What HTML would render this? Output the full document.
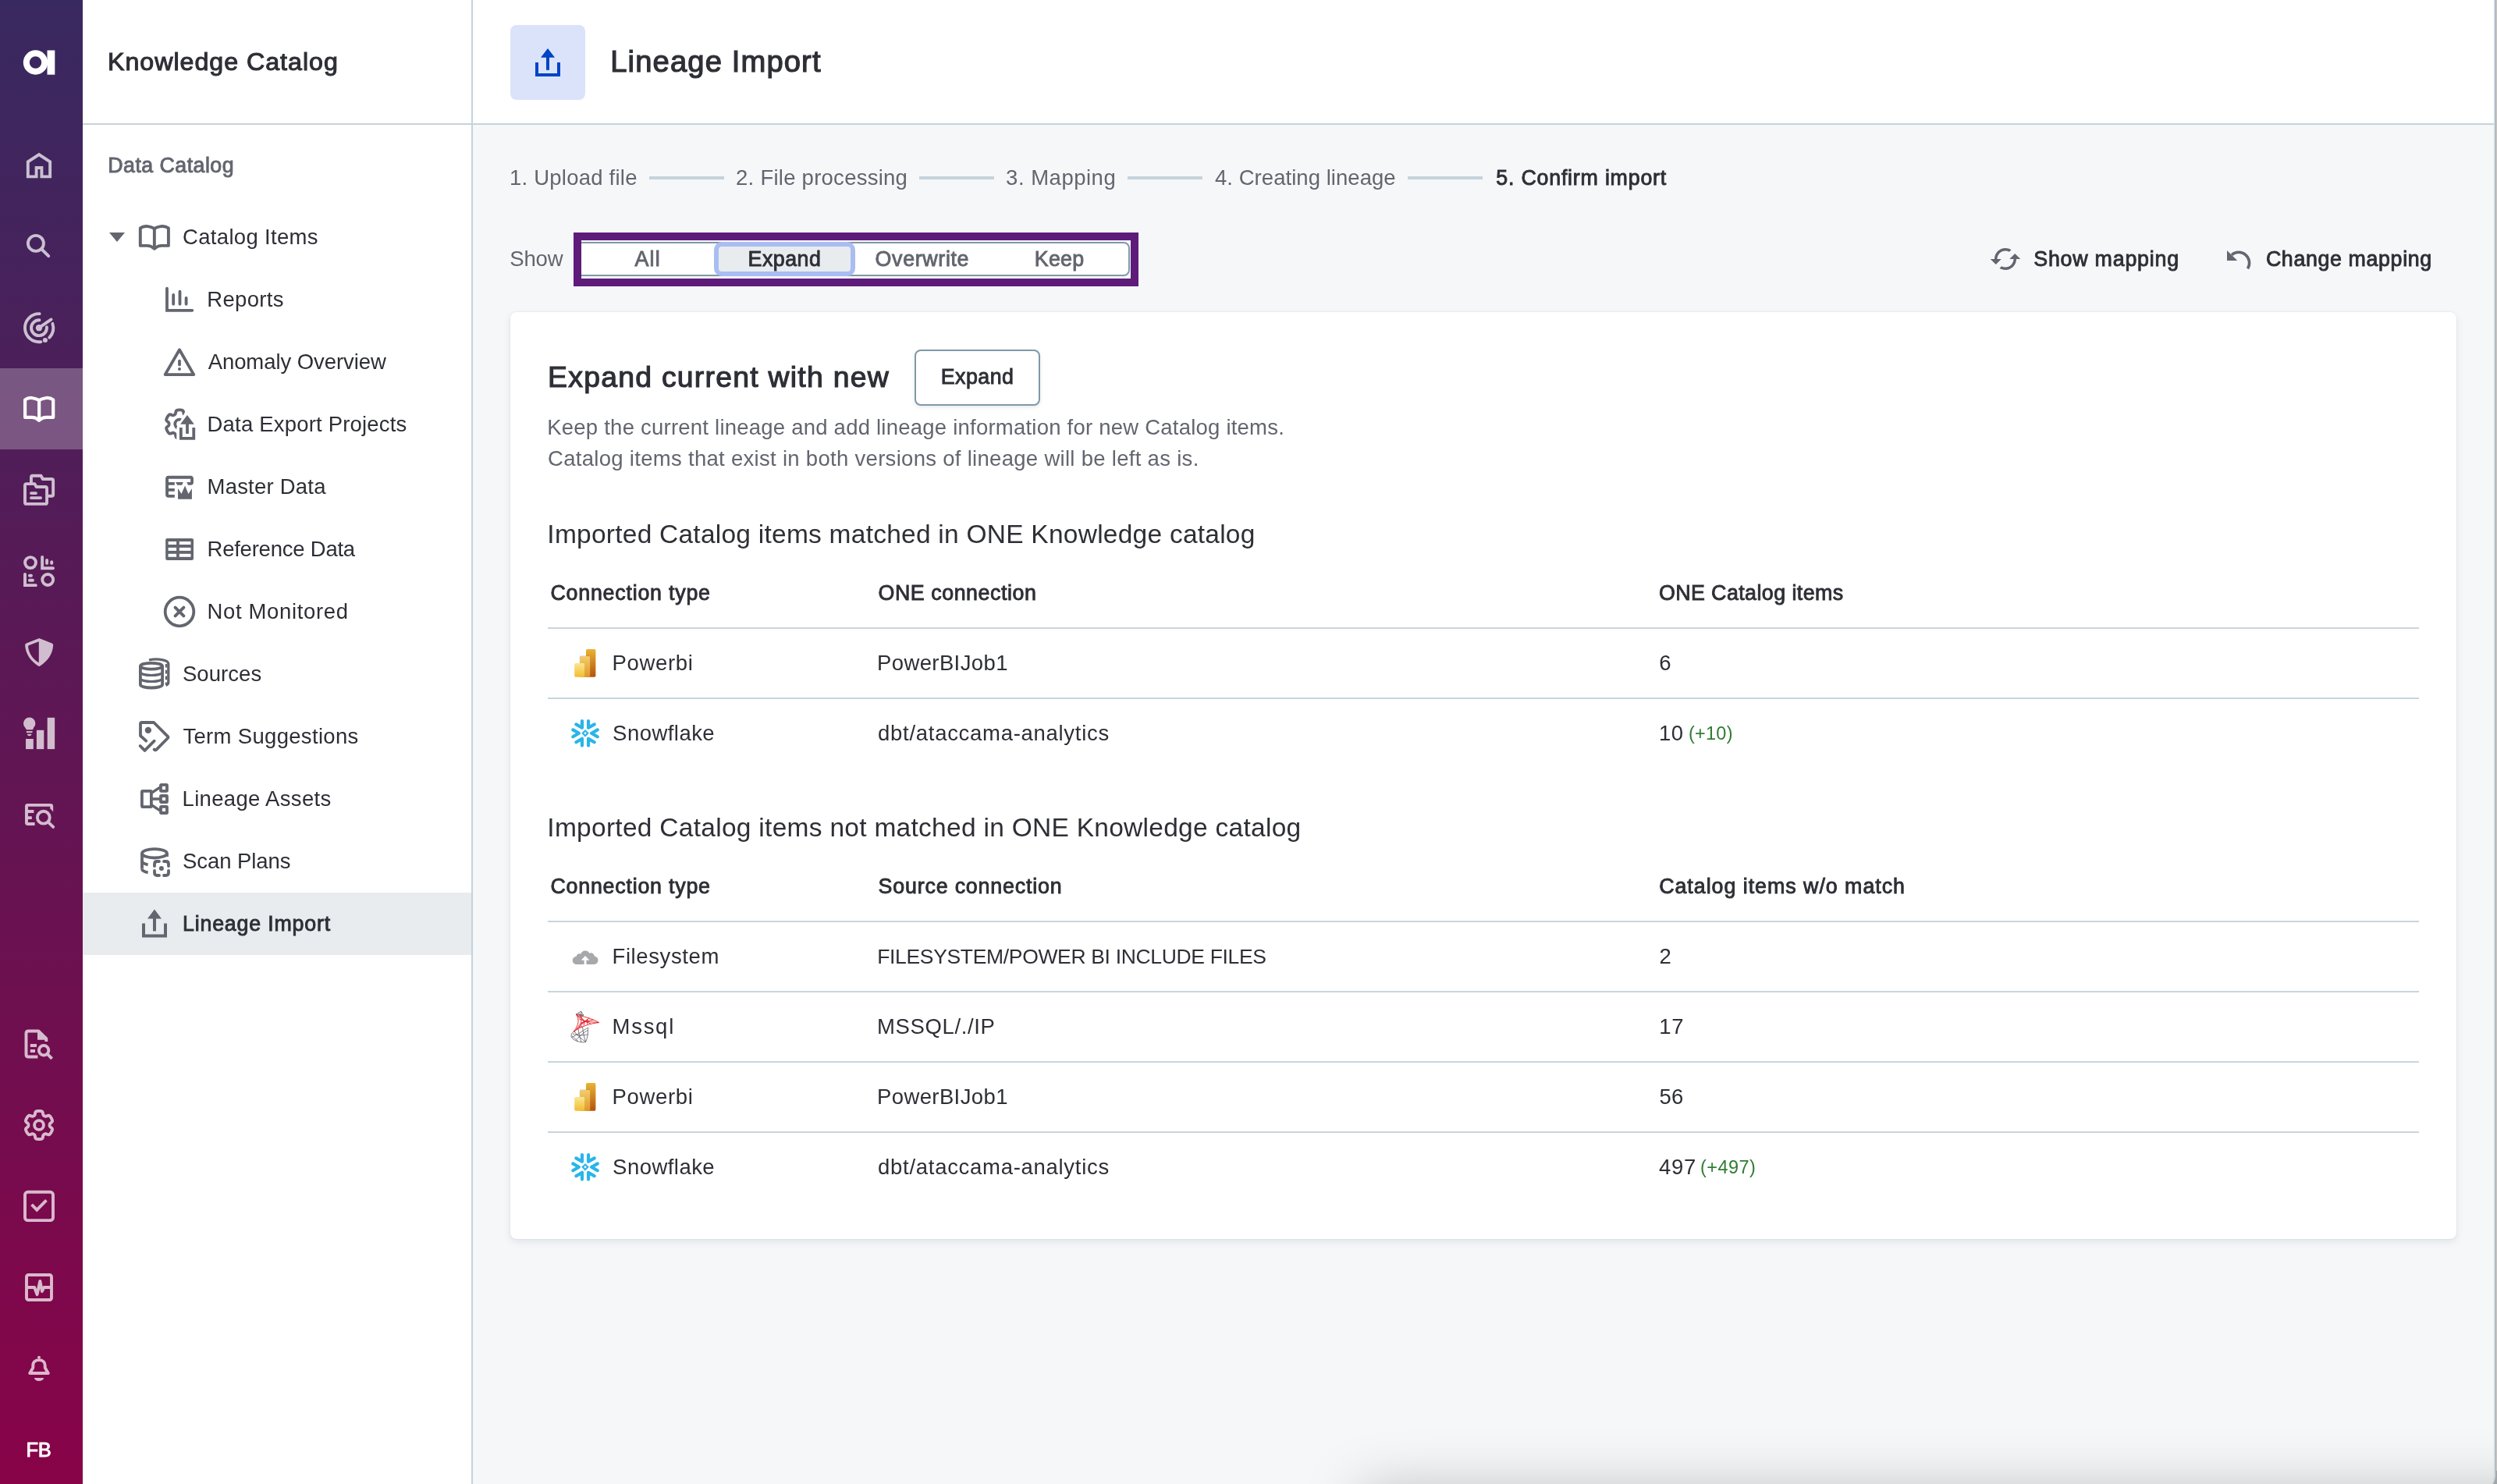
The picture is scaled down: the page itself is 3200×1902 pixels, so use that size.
<!DOCTYPE html>
<html lang="en">
<head>
<meta charset="utf-8">
<title>Lineage Import</title>
<style>
*{box-sizing:border-box;margin:0;padding:0}
html,body{width:3200px;height:1902px;overflow:hidden;background:#f6f7f9}
body{font-family:"Liberation Sans",sans-serif;font-size:28px;color:#2e2f36;position:relative}
#app{position:absolute;left:0;top:0;width:3200px;height:1902px;overflow:hidden;will-change:transform}
.abs{position:absolute}
.t{position:absolute;white-space:nowrap;line-height:40px;height:40px}
.m{-webkit-text-stroke:0.9px currentColor}
.g{color:#63656f}
.grn{color:#2e7d32}
#rail{left:0;top:0;width:106px;height:1902px;background:linear-gradient(180deg,#382960 0%,#880348 100%)}
#ract{left:0;top:472px;width:106px;height:104px;background:rgba(255,255,255,.25)}
#side{left:106px;top:0;width:498px;height:1902px;background:#fff}
#sact{left:106px;top:1144px;width:498px;height:80px;background:#e8ecef}
#sideb{left:604px;top:0;width:2px;height:1902px;background:#c5d3dc}
#head{left:606px;top:0;width:2590px;height:158px;background:#fff}
#headb{left:106px;top:158px;width:3090px;height:2px;background:#c5d3dc}
#hicon{left:654px;top:32px;width:96px;height:96px;border-radius:8px;background:#dbe3fb}
#card{left:654px;top:400px;width:2494px;height:1188px;background:#fff;border-radius:8px;box-shadow:0 4px 10px rgba(50,80,100,.11),0 0 2px rgba(50,80,100,.14)}
.hl{position:absolute;left:702px;width:2398px;height:2px;background:#c8d6dc}
.sl{position:absolute;top:226px;width:96px;height:4px;background:#c5d3dc}
#caret{left:140px;top:298px;width:0;height:0;border-left:10px solid transparent;border-right:10px solid transparent;border-top:12px solid #63656f}
#seg{left:737px;top:310px;width:711px;height:44px;background:#fff;border:2px solid #7f99a8;border-radius:8px}
#segsel{left:915px;top:310px;width:181px;height:44px;background:#e8ecef;border:6px solid #a9bdf2;border-radius:10px}
#purple{left:735px;top:298px;width:724px;height:69px;border:10px solid #5e1b7a}
#cbtn{left:1172px;top:448px;width:161px;height:72px;border:2px solid #7f99a8;border-radius:8px;background:#fff;box-shadow:0 2px 5px rgba(30,50,70,.10)}
#redge0{left:3190px;top:1880px;width:10px;height:22px;background:#b4b6b9}
#redge{left:3100px;top:-30px;width:98px;height:1943px;border-right:2px solid #c9d8e1;border-bottom-right-radius:22px;background:transparent}
#redgebg{left:3150px;top:1860px;width:46px;height:53px;border-bottom-right-radius:20px;background:#f6f7f9}
#redge2{left:3100px;top:-30px;width:99.4px;height:1944px;border-right:1.4px solid #a3a3a3;border-bottom-right-radius:23px}
#redge3{left:3199.4px;top:0;width:1px;height:1885px;background:#cfcfcf}
#bshadow{left:1745px;top:1912px;width:1700px;height:120px;box-shadow:0 0 76px rgba(0,0,0,.25)}
</style>
</head>
<body>
<div id="app">
<div class="abs" id="side"></div>
<div class="abs" id="sact"></div>
<div class="abs" id="head"></div>
<div class="abs" id="sideb"></div>
<div class="abs" id="headb"></div>
<div class="abs" id="rail"></div>
<div class="abs" id="ract"></div>
<div class="abs" id="redge0"></div>
<div class="abs" id="redgebg"></div>
<div class="abs" id="bshadow"></div>
<div class="abs" id="redge3"></div>
<div class="abs" id="redge2"></div>
<div class="abs" id="redge"></div>
<div class="abs" id="hicon"></div>
<div class="abs" id="caret"></div>
<div class="abs" id="card"></div>
<div class="hl" style="top:804px"></div><div class="hl" style="top:894px"></div><div class="hl" style="top:1180px"></div><div class="hl" style="top:1270px"></div><div class="hl" style="top:1360px"></div><div class="hl" style="top:1450px"></div>
<div class="sl" style="left:832px"></div><div class="sl" style="left:1178px"></div><div class="sl" style="left:1445px"></div><div class="sl" style="left:1804px"></div>
<div class="abs" id="seg"></div>
<div class="abs" id="segsel"></div>
<div class="abs" id="purple"></div>
<div class="abs" id="cbtn"></div>
<svg class="abs" id="icons" style="left:0;top:0" width="3200" height="1902" viewBox="0 0 3200 1902">
<g opacity="0.72"><path d="M35.8,226.35 V207.3 L50,198 L64.15,207.3 V226.35 H53.4 V214.95 H46.6 V226.35 Z" fill="none" stroke="#fff" stroke-width="3.9" stroke-width="3.7" stroke-linejoin="miter"/><circle cx="45.9" cy="311.9" r="10" fill="none" stroke="#fff" stroke-width="3.9" stroke-width="4"/><path d="M53,319 L62.2,328.2" fill="none" stroke="#fff" stroke-width="3.9" stroke-width="3.8" stroke-linecap="round"/><g fill="none" stroke="#fff" stroke-width="3.9" stroke-width="4.2" stroke-linecap="round"><path d="M50.63,402.16 A18.05,18.05 0 1 0 52.39,438.09"/><path d="M67.38,414.79 A18.2,18.2 0 0 1 63.27,432.66"/><path d="M50.43,410.26 A9.95,9.95 0 1 0 59.89,419.13"/><path d="M50,420.2 L65.55,409.46"/></g><circle cx="50" cy="420.2" r="4.15" fill="#fff"/><circle cx="57.9" cy="435.96" r="3.05" fill="#fff"/><g transform="translate(30,608)" fill="none" stroke="#fff" stroke-width="3.9" stroke-width="4" stroke-linejoin="round"><path d="M9.96,12.1 V3.8 Q9.96,1.8 11.96,1.8 H22.6 L24.8,6 H36.15 Q38.15,6 38.15,8 V25.8 Q38.15,27.8 36.15,27.8 H30.05"/><path d="M4,12.1 H14.4 L16.6,16.06 H28.05 Q30.05,16.06 30.05,18.06 V35.9 Q30.05,37.9 28.05,37.9 H4 Q2,37.9 2,35.9 V14.1 Q2,12.1 4,12.1 Z"/><path d="M10,24.05 H16 M10,30.05 H22.1" stroke-linecap="round" stroke-width="3.8"/></g><g fill="none" stroke="#fff" stroke-width="3.9" stroke-width="4.05"><circle cx="39" cy="721.1" r="6.95"/><circle cx="61.2" cy="743" r="6.95"/><g stroke-linecap="round" stroke-linejoin="miter" stroke-width="3.9"><path d="M54.15,714 V728.25 H68"/><path d="M60.1,718 V721.9 M66.2,720.1 V721.9"/><path d="M32,735.9 V750.15 H45.85"/><path d="M37.9,737.8 H40 M37.9,743.8 H42"/></g></g><path fill-rule="evenodd" fill="#fff" d="M50.2,817.9 L66.6,824.4 Q68.3,825.1 68.2,827 C67.6,838 61,848 50.2,854.15 C39.4,848 32.7,838 32.1,827 Q32,825.1 33.7,824.4 Z M49.8,822.2 L37.3,827.1 Q36,827.6 36.1,829 C37,837 41.5,844.5 49.8,849.3 Z"/><g transform="translate(30,920)" fill="#fff"><path d="M4,15.2 L2.2,12.6 A7.7,7.7 0 1 1 13.2,12.6 L11.9,15.2 Z"/><rect x="3.8" y="17.1" width="7.7" height="2"/><path d="M4.9,20.85 H10.4 Q10.4,23.3 7.65,23.3 Q4.9,23.3 4.9,20.85 Z"/><rect x="3.05" y="27" width="9.75" height="13.1"/><rect x="16.9" y="15.8" width="9.4" height="24.3"/><rect x="30.7" y="-0.2" width="9.45" height="40.3"/></g><g transform="translate(30,1028)"><g fill="none" stroke="#fff" stroke-width="3.9" stroke-width="3.9" stroke-linejoin="round"><path d="M14.6,28 H5.5 Q4,28 4,26.5 V5.4 Q4,3.9 5.5,3.9 H34.7 Q36.2,3.9 36.2,5.4 V8.6"/><path d="M4,11.95 H13.4 M4,20.15 H10.8"/></g><path d="M34.25,8 H38.15 V12.6 Z" fill="#fff"/><circle cx="25.8" cy="19.7" r="7.9" fill="none" stroke="#fff" stroke-width="3.9" stroke-width="4.2"/><path d="M31.4,25.3 L38.2,31.96" fill="none" stroke="#fff" stroke-width="3.9" stroke-linecap="round"/></g><g transform="translate(30,1318)"><path d="M18.4,36.5 H6.5 Q3.5,36.5 3.5,33.5 V6.55 Q3.5,3.55 6.5,3.55 H19.5 L29.3,13.2 V16.9" fill="none" stroke="#fff" stroke-width="3.9" stroke-width="3.3" stroke-linejoin="round"/><path d="M18,2 L20.2,1.9 L30.95,12.5 V16.9 L27.2,14.7 H18 Z" fill="#fff"/><path d="M8.8,21.95 H17 M8.8,28.95 H15" fill="none" stroke="#fff" stroke-width="3.9" stroke-width="3.5"/><circle cx="26.1" cy="28.3" r="6.24" fill="none" stroke="#fff" stroke-width="3.9" stroke-width="3.7"/><path d="M30.5,32.7 L36.6,38.8" fill="none" stroke="#fff" stroke-width="3.9" stroke-width="3.6"/></g><path d="M63.60,1442.00 L63.61,1441.64 L63.63,1441.29 L63.69,1440.92 L63.79,1440.55 L64.00,1440.16 L64.36,1439.73 L64.92,1439.23 L65.64,1438.68 L66.31,1438.08 L66.78,1437.50 L67.00,1436.97 L67.04,1436.46 L66.98,1435.99 L66.86,1435.53 L66.70,1435.08 L66.53,1434.64 L66.33,1434.21 L66.13,1433.78 L65.91,1433.36 L65.68,1432.95 L65.43,1432.54 L65.18,1432.14 L64.91,1431.75 L64.63,1431.37 L64.34,1430.99 L64.03,1430.64 L63.69,1430.30 L63.31,1430.01 L62.86,1429.80 L62.28,1429.72 L61.55,1429.83 L60.70,1430.12 L59.86,1430.46 L59.15,1430.70 L58.60,1430.80 L58.15,1430.78 L57.78,1430.69 L57.43,1430.55 L57.11,1430.39 L56.80,1430.22 L56.49,1430.04 L56.20,1429.84 L55.91,1429.61 L55.64,1429.33 L55.40,1428.96 L55.21,1428.43 L55.07,1427.69 L54.94,1426.80 L54.76,1425.92 L54.50,1425.22 L54.14,1424.76 L53.73,1424.48 L53.28,1424.29 L52.82,1424.17 L52.36,1424.08 L51.89,1424.01 L51.42,1423.96 L50.95,1423.93 L50.47,1423.91 L50.00,1423.90 L49.53,1423.91 L49.05,1423.93 L48.58,1423.96 L48.11,1424.01 L47.64,1424.08 L47.18,1424.17 L46.72,1424.29 L46.27,1424.48 L45.86,1424.76 L45.50,1425.22 L45.24,1425.92 L45.06,1426.80 L44.93,1427.69 L44.79,1428.43 L44.60,1428.96 L44.36,1429.33 L44.09,1429.61 L43.80,1429.84 L43.51,1430.04 L43.20,1430.22 L42.89,1430.39 L42.57,1430.55 L42.22,1430.69 L41.85,1430.78 L41.40,1430.80 L40.85,1430.70 L40.14,1430.46 L39.30,1430.12 L38.45,1429.83 L37.72,1429.72 L37.14,1429.80 L36.69,1430.01 L36.31,1430.30 L35.97,1430.64 L35.66,1430.99 L35.37,1431.37 L35.09,1431.75 L34.82,1432.14 L34.57,1432.54 L34.32,1432.95 L34.09,1433.36 L33.87,1433.78 L33.67,1434.21 L33.47,1434.64 L33.30,1435.08 L33.14,1435.53 L33.02,1435.99 L32.96,1436.46 L33.00,1436.97 L33.22,1437.50 L33.69,1438.08 L34.36,1438.68 L35.08,1439.23 L35.64,1439.73 L36.00,1440.16 L36.21,1440.55 L36.31,1440.92 L36.37,1441.29 L36.39,1441.64 L36.40,1442.00 L36.39,1442.36 L36.37,1442.71 L36.31,1443.08 L36.21,1443.45 L36.00,1443.84 L35.64,1444.27 L35.08,1444.77 L34.36,1445.32 L33.69,1445.92 L33.22,1446.50 L33.00,1447.03 L32.96,1447.54 L33.02,1448.01 L33.14,1448.47 L33.30,1448.92 L33.47,1449.36 L33.67,1449.79 L33.87,1450.22 L34.09,1450.64 L34.32,1451.05 L34.57,1451.46 L34.82,1451.86 L35.09,1452.25 L35.37,1452.63 L35.66,1453.01 L35.97,1453.36 L36.31,1453.70 L36.69,1453.99 L37.14,1454.20 L37.72,1454.28 L38.45,1454.17 L39.30,1453.88 L40.14,1453.54 L40.85,1453.30 L41.40,1453.20 L41.85,1453.22 L42.22,1453.31 L42.57,1453.45 L42.89,1453.61 L43.20,1453.78 L43.51,1453.96 L43.80,1454.16 L44.09,1454.39 L44.36,1454.67 L44.60,1455.04 L44.79,1455.57 L44.93,1456.31 L45.06,1457.20 L45.24,1458.08 L45.50,1458.78 L45.86,1459.24 L46.27,1459.52 L46.72,1459.71 L47.18,1459.83 L47.64,1459.92 L48.11,1459.99 L48.58,1460.04 L49.05,1460.07 L49.53,1460.09 L50.00,1460.10 L50.47,1460.09 L50.95,1460.07 L51.42,1460.04 L51.89,1459.99 L52.36,1459.92 L52.82,1459.83 L53.28,1459.71 L53.73,1459.52 L54.14,1459.24 L54.50,1458.78 L54.76,1458.08 L54.94,1457.20 L55.07,1456.31 L55.21,1455.57 L55.40,1455.04 L55.64,1454.67 L55.91,1454.39 L56.20,1454.16 L56.49,1453.96 L56.80,1453.78 L57.11,1453.61 L57.43,1453.45 L57.78,1453.31 L58.15,1453.22 L58.60,1453.20 L59.15,1453.30 L59.86,1453.54 L60.70,1453.88 L61.55,1454.17 L62.28,1454.28 L62.86,1454.20 L63.31,1453.99 L63.69,1453.70 L64.03,1453.36 L64.34,1453.01 L64.63,1452.63 L64.91,1452.25 L65.18,1451.86 L65.43,1451.46 L65.68,1451.05 L65.91,1450.64 L66.13,1450.22 L66.33,1449.79 L66.53,1449.36 L66.70,1448.92 L66.86,1448.47 L66.98,1448.01 L67.04,1447.54 L67.00,1447.03 L66.78,1446.50 L66.31,1445.92 L65.64,1445.32 L64.92,1444.77 L64.36,1444.27 L64.00,1443.84 L63.79,1443.45 L63.69,1443.08 L63.63,1442.71 L63.61,1442.36Z" fill="none" stroke="#fff" stroke-width="3.9" stroke-width="4.2" stroke-linejoin="round"/><circle cx="50" cy="1442" r="5.9" fill="none" stroke="#fff" stroke-width="3.9" stroke-width="4"/><g transform="translate(30,1526)"><rect x="2" y="1.8" width="36" height="36.3" rx="3.7" fill="none" stroke="#fff" stroke-width="3.9" stroke-width="4"/><path d="M10.6,17.8 L17.25,24.6 L29.4,12.3" fill="none" stroke="#fff" stroke-width="3.9" stroke-width="3.6"/></g><g transform="translate(30,1630)"><rect x="4" y="4" width="32" height="32" rx="2.5" fill="none" stroke="#fff" stroke-width="3.9" stroke-width="4"/><path d="M4,20 H14.1 L17.6,29.2 L21.3,11.9 L23.95,25 L26.4,20 H36" fill="none" stroke="#fff" stroke-width="3.9" stroke-width="3.3" stroke-linejoin="round"/></g><g transform="translate(30,1736)"><path d="M8.2,24 L12.3,17 V14 C12.3,9.5 15.5,7.15 20,7.15 C24.5,7.15 27.7,9.5 27.7,14 V17 L31.8,24 Z" fill="none" stroke="#fff" stroke-width="3.9" stroke-width="3.9" stroke-linejoin="round"/><circle cx="20" cy="3.7" r="2" fill="#fff"/><path d="M13.9,30 H26.1 A6.1,4 0 0 1 13.9,30 Z" fill="#fff"/></g></g>
<circle cx="45.5" cy="80" r="11.7" fill="none" stroke="#fff" stroke-width="8"/><rect x="60.5" y="64.5" width="9.8" height="31.2" fill="#fff"/>
<g transform="translate(30.1,503)" fill="none" stroke="#fff" stroke-width="4.2" stroke-linejoin="round"><path d="M2,9.4 C5,7.2 9,6.6 12,7.2 C15.5,7.8 18,8.8 20.05,10 C22,8.8 24.5,7.8 28,7.2 C31,6.6 35,7.2 38.1,9.4 V31.9 H29 C25.5,31.9 22.5,33.6 20.05,35.8 C17.5,33.6 14.5,31.9 11,31.9 H2 Z"/><path d="M20.05,10 V35"/></g>
<g transform="translate(177.8,283)" fill="none" stroke="#63656f" stroke-width="3.9" stroke-linejoin="round"><path d="M2,9.4 C5,7.2 9,6.6 12,7.2 C15.5,7.8 18,8.8 20.05,10 C22,8.8 24.5,7.8 28,7.2 C31,6.6 35,7.2 38.1,9.4 V31.9 H29 C25.5,31.9 22.5,33.6 20.05,35.8 C17.5,33.6 14.5,31.9 11,31.9 H2 Z"/><path d="M20.05,10 V35"/></g>
<g transform="translate(210,363)" fill="none" stroke="#63656f" stroke-width="3.8" stroke-linecap="round"><path d="M4,6.7 V34.8 H36.3"/><path d="M12.2,14.9 V26.7 M20.5,10.7 V26.7 M28.6,18.9 V26.7"/></g>
<g transform="translate(210,443)" fill="none" stroke="#63656f" stroke-width="3.8" stroke-linejoin="round" stroke-linecap="round"><path d="M20,5.3 L38.3,37.1 H1.6 Z"/><path d="M20,19.6 V24.4"/><circle cx="20" cy="29.9" r="1.2" fill="#63656f" stroke-width="1.6"/></g>
<g transform="translate(210,523)"><clipPath id="cpx"><path d="M-3,-3 H30 L27.2,5.1 L16.3,25.3 V44 H-3 Z"/></clipPath><g clip-path="url(#cpx)"><path d="M33.80,20.50 L33.81,20.14 L33.83,19.79 L33.89,19.42 L33.99,19.05 L34.20,18.66 L34.56,18.23 L35.12,17.73 L35.84,17.18 L36.51,16.58 L36.98,16.00 L37.20,15.47 L37.24,14.96 L37.18,14.49 L37.06,14.03 L36.90,13.58 L36.73,13.14 L36.53,12.71 L36.33,12.28 L36.11,11.86 L35.88,11.45 L35.63,11.04 L35.38,10.64 L35.11,10.25 L34.83,9.87 L34.54,9.49 L34.23,9.14 L33.89,8.80 L33.51,8.51 L33.06,8.30 L32.48,8.22 L31.75,8.33 L30.90,8.62 L30.06,8.96 L29.35,9.20 L28.80,9.30 L28.35,9.28 L27.98,9.19 L27.63,9.05 L27.31,8.89 L27.00,8.72 L26.69,8.54 L26.40,8.34 L26.11,8.11 L25.84,7.83 L25.60,7.46 L25.41,6.93 L25.27,6.19 L25.14,5.30 L24.96,4.42 L24.70,3.72 L24.34,3.26 L23.93,2.98 L23.48,2.79 L23.02,2.67 L22.56,2.58 L22.09,2.51 L21.62,2.46 L21.15,2.43 L20.67,2.41 L20.20,2.40 L19.73,2.41 L19.25,2.43 L18.78,2.46 L18.31,2.51 L17.84,2.58 L17.38,2.67 L16.92,2.79 L16.47,2.98 L16.06,3.26 L15.70,3.72 L15.44,4.42 L15.26,5.30 L15.13,6.19 L14.99,6.93 L14.80,7.46 L14.56,7.83 L14.29,8.11 L14.00,8.34 L13.71,8.54 L13.40,8.72 L13.09,8.89 L12.77,9.05 L12.42,9.19 L12.05,9.28 L11.60,9.30 L11.05,9.20 L10.34,8.96 L9.50,8.62 L8.65,8.33 L7.92,8.22 L7.34,8.30 L6.89,8.51 L6.51,8.80 L6.17,9.14 L5.86,9.49 L5.57,9.87 L5.29,10.25 L5.02,10.64 L4.77,11.04 L4.52,11.45 L4.29,11.86 L4.07,12.28 L3.87,12.71 L3.67,13.14 L3.50,13.58 L3.34,14.03 L3.22,14.49 L3.16,14.96 L3.20,15.47 L3.42,16.00 L3.89,16.58 L4.56,17.18 L5.28,17.73 L5.84,18.23 L6.20,18.66 L6.41,19.05 L6.51,19.42 L6.57,19.79 L6.59,20.14 L6.60,20.50 L6.59,20.86 L6.57,21.21 L6.51,21.58 L6.41,21.95 L6.20,22.34 L5.84,22.77 L5.28,23.27 L4.56,23.82 L3.89,24.42 L3.42,25.00 L3.20,25.53 L3.16,26.04 L3.22,26.51 L3.34,26.97 L3.50,27.42 L3.67,27.86 L3.87,28.29 L4.07,28.72 L4.29,29.14 L4.52,29.55 L4.77,29.96 L5.02,30.36 L5.29,30.75 L5.57,31.13 L5.86,31.51 L6.17,31.86 L6.51,32.20 L6.89,32.49 L7.34,32.70 L7.92,32.78 L8.65,32.67 L9.50,32.38 L10.34,32.04 L11.05,31.80 L11.60,31.70 L12.05,31.72 L12.42,31.81 L12.77,31.95 L13.09,32.11 L13.40,32.28 L13.71,32.46 L14.00,32.66 L14.29,32.89 L14.56,33.17 L14.80,33.54 L14.99,34.07 L15.13,34.81 L15.26,35.70 L15.44,36.58 L15.70,37.28 L16.06,37.74 L16.47,38.02 L16.92,38.21 L17.38,38.33 L17.84,38.42 L18.31,38.49 L18.78,38.54 L19.25,38.57 L19.73,38.59 L20.20,38.60 L20.67,38.59 L21.15,38.57 L21.62,38.54 L22.09,38.49 L22.56,38.42 L23.02,38.33 L23.48,38.21 L23.93,38.02 L24.34,37.74 L24.70,37.28 L24.96,36.58 L25.14,35.70 L25.27,34.81 L25.41,34.07 L25.60,33.54 L25.84,33.17 L26.11,32.89 L26.40,32.66 L26.69,32.46 L27.00,32.28 L27.31,32.11 L27.63,31.95 L27.98,31.81 L28.35,31.72 L28.80,31.70 L29.35,31.80 L30.06,32.04 L30.90,32.38 L31.75,32.67 L32.48,32.78 L33.06,32.70 L33.51,32.49 L33.89,32.20 L34.23,31.86 L34.54,31.51 L34.83,31.13 L35.11,30.75 L35.38,30.36 L35.63,29.96 L35.88,29.55 L36.11,29.14 L36.33,28.72 L36.53,28.29 L36.73,27.86 L36.90,27.42 L37.06,26.97 L37.18,26.51 L37.24,26.04 L37.20,25.53 L36.98,25.00 L36.51,24.42 L35.84,23.82 L35.12,23.27 L34.56,22.77 L34.20,22.34 L33.99,21.95 L33.89,21.58 L33.83,21.21 L33.81,20.86Z" fill="none" stroke="#63656f" stroke-width="3.8" stroke-width="4" stroke-linejoin="round"/><circle cx="20.2" cy="20.5" r="5.9" fill="none" stroke="#63656f" stroke-width="3.8" stroke-width="4"/></g><path d="M21.1,20.7 L29.9,9.1 L38.9,20.7 Z" fill="#63656f"/><rect x="28.1" y="20" width="3.8" height="12.9" fill="#63656f"/><path d="M21.85,25.1 V38.95 H38.25 V25.1" fill="none" stroke="#63656f" stroke-width="3.8" stroke-width="3.7"/></g>
<g transform="translate(210,603)"><path d="M13.8,32.9 H6 Q4.05,32.9 4.05,31 V10.7 Q4.05,8.75 6,8.75 H34.1 Q36.05,8.75 36.05,10.7 V15 Q36.05,16.95 34.1,16.95 H31.1 M4.05,16.95 H13.8 M4.05,24.95 H13.8" fill="none" stroke="#63656f" stroke-width="3.8" stroke-width="3.7"/><path d="M14.95,15.1 H24.85 L23.15,18.8 H17.35 Z M29.1,15.1 H31.4 V18.8 H31.1 Z" fill="#63656f"/><path d="M18.06,36.8 V23.6 L18.3,23.2 L22.45,30.1 L27.1,19.5 L31.5,30 L35.75,23.2 L35.9,23.6 V36.8 Z" fill="#63656f"/></g>
<g transform="translate(210,683)"><rect x="2.2" y="7" width="35.8" height="28" rx="2.2" fill="#63656f"/><rect x="5.6" y="11" width="10.5" height="4" fill="#fff"/><rect x="19.8" y="11" width="14.7" height="4" fill="#fff"/><rect x="5.6" y="18.9" width="10.5" height="4" fill="#fff"/><rect x="19.8" y="18.9" width="14.7" height="4" fill="#fff"/><rect x="5.6" y="26.8" width="10.5" height="4" fill="#fff"/><rect x="19.8" y="26.8" width="14.7" height="4" fill="#fff"/></g>
<g transform="translate(210,763)" fill="none" stroke="#63656f" stroke-width="3.8"><circle cx="20" cy="21" r="18.3"/><path d="M14.6,15.6 L25.4,26.4 M25.4,15.6 L14.6,26.4" stroke-width="4" stroke-linecap="round"/></g>
<g transform="translate(178,843)" fill="none" stroke="#63656f" stroke-width="3.8"><ellipse cx="16" cy="10.7" rx="14.1" ry="3.9"/><path d="M1.9,10.7 V34.6 A14.1,3.9 0 0 0 30.1,34.6 V10.7"/><path d="M1.9,18.6 A14.1,3.9 0 0 0 30.1,18.6 M1.9,26.6 A14.1,3.9 0 0 0 30.1,26.6" stroke-width="3.2"/><path d="M13,2.9 C24,0.6 37.8,2.6 37.8,7.6 V31.5 C37.8,33.4 36.4,34.6 34.6,35.4" stroke-width="3.3"/><path d="M35,8 V35" stroke-width="2.4" stroke-dasharray="4.6 3.2"/></g>
<g transform="translate(178,923)" fill="none" stroke="#63656f" stroke-width="3.8" stroke-linecap="round" stroke-linejoin="round"><path d="M9.3,26.6 L2,20 V4.6 Q2,3 3.6,3 H19.2 L37,20.8 Q38,21.9 37,23 L22.6,37.6 Q21,39 19.6,37.6"/><path d="M1.6,33 L7.5,38.9 L19.7,26.7"/><circle cx="11.9" cy="12.9" r="2.3" fill="#63656f"/></g>
<g transform="translate(178,1003)" fill="none" stroke="#63656f" stroke-width="3.8" stroke-width="3.7" stroke-linejoin="round"><rect x="3.9" y="10.9" width="12" height="20.2" rx="1"/><rect x="28" y="2.9" width="8" height="8" rx="0.8"/><rect x="28" y="17" width="8" height="8" rx="0.8"/><rect x="28" y="30.9" width="8" height="8.1" rx="0.8"/><path d="M16,21 H28 M16.6,13 L27,6.2 M16.6,29 L27,35.8" stroke-width="3.4"/></g>
<g transform="translate(178,1083)" fill="none" stroke="#63656f" stroke-width="3.8" stroke-width="3.8"><ellipse cx="20" cy="10.8" rx="16" ry="5.7"/><path d="M4,10.8 V30.5 M36,10.8 V15"/><path d="M4,20.5 A16,5.7 0 0 0 11.6,25.3 M4,30.5 A16,5.7 0 0 0 11.6,35.4"/><rect x="13" y="14" width="30" height="30" fill="#fff" stroke="none" opacity="0"/><g stroke-linecap="round"><path d="M20,27 V24.4 Q20,21 23.4,21 H26 M32,21 H34.6 Q38,21 38,24.4 V27 M38,33 V35.6 Q38,39 34.6,39 H32 M26,39 H23.4 Q20,39 20,35.6 V33"/></g><circle cx="28.9" cy="29.9" r="3" fill="#63656f" stroke="none"/></g>
<g transform="translate(178,1163.6)" fill="#63656f"><path d="M11,13.8 L20,2 L29,13.8 Z"/><rect x="18" y="13" width="4" height="16.8"/><path d="M4,20 H8 V34 H32 V20 H36 V38 H4 Z"/></g>
<g transform="translate(682,60)" fill="#0043c4"><path d="M11,13.8 L20,2 L29,13.8 Z"/><rect x="18" y="13" width="4" height="16.8"/><path d="M4,20 H8 V34 H32 V20 H36 V38 H4 Z"/></g>
<g transform="translate(2549,311) scale(1.75)" fill="#63656f"><path d="M19 8l-4 4h3c0 3.31-2.69 6-6 6-1.01 0-1.97-.25-2.8-.7l-1.46 1.46C8.97 19.54 10.43 20 12 20c4.42 0 8-3.58 8-8h3l-4-4zM6 12c0-3.31 2.69-6 6-6 1.01 0 1.97.25 2.8.7l1.46-1.46C15.03 4.46 13.57 4 12 4c-4.42 0-8 3.58-8 8H1l4 4 4-4H6z"/></g>
<path d="M2854,320.9 V333.9 H2867.2 Z" fill="#63656f"/><path d="M2860.02,326.62 A13.7,13.7 0 0 1 2880.52,344.31" fill="none" stroke="#63656f" stroke-width="3.5"/>
<defs><linearGradient id="pb1" x1="0" y1="0" x2="0" y2="1"><stop offset="0" stop-color="#e9b434"/><stop offset="1" stop-color="#b5520f"/></linearGradient><linearGradient id="pb2" x1="0" y1="0" x2="0" y2="1"><stop offset="0" stop-color="#f2cd6e"/><stop offset="1" stop-color="#df9727"/></linearGradient><linearGradient id="pb3" x1="0" y1="0" x2="0" y2="1"><stop offset="0" stop-color="#fbe690"/><stop offset="1" stop-color="#f1bd30"/></linearGradient></defs>
<g transform="translate(0,0)"><rect x="751" y="831.9" width="12.4" height="35.8" rx="1.6" fill="url(#pb1)"/><rect x="742.8" y="840.5" width="13.6" height="27.2" rx="1.6" fill="#b9781f" opacity=".45"/><rect x="743.4" y="840.9" width="12.8" height="26.8" rx="1.6" fill="url(#pb2)"/><rect x="736.2" y="850" width="12.9" height="17.7" rx="1.6" fill="url(#pb3)"/></g>
<g fill="none" stroke="#29b5e8" stroke-width="4.2" stroke-linecap="round" stroke-linejoin="round"><path d="M765.72,944.20 L758.10,939.80 L765.72,935.40"/><path d="M761.67,928.39 L754.05,932.79 L754.05,923.99"/><path d="M745.95,923.99 L745.95,932.79 L738.33,928.39"/><path d="M734.28,935.40 L741.90,939.80 L734.28,944.20"/><path d="M738.33,951.21 L745.95,946.81 L745.95,955.61"/><path d="M754.05,955.61 L754.05,946.81 L761.67,951.21"/></g><path d="M750,935.4 L754.4,939.8 L750,944.1999999999999 L745.6,939.8 Z" fill="#29b5e8" stroke="#29b5e8" stroke-width="0.8" stroke-linejoin="round"/><path d="M750,938.0999999999999 L751.7,939.8 L750,941.5 L748.3,939.8 Z" fill="#fff"/>
<g transform="translate(0,0)"><path d="M739,1236 A5.1,5.1 0 0 1 738.6,1225.8 A4.2,4.2 0 0 1 744.4,1222.6 A5.9,5.9 0 0 1 755.4,1221.8 A4.2,4.2 0 0 1 761.6,1225.6 A5.2,5.2 0 0 1 761,1236 Z" fill="#a6a8ac"/><path d="M744.7,1230.8 L750,1225 L755.4,1230.8 H751.5 V1236.2 H748.6 V1230.8 Z" fill="#fff"/></g>
<g transform="translate(0,0)" fill="none" stroke-linejoin="round"><g stroke="#5a5c63" stroke-width="0.8"><path d="M744.7,1296.2 L738.4,1300 L742,1304 L747.8,1301.2 Z M744.7,1296.2 L745,1302.6 M741,1298.4 L746.5,1301.8 M738.4,1300 L747.8,1301.2"/><path d="M736,1321.6 C731.6,1324.6 730.8,1328 733.6,1331 C737,1334.4 745,1336.8 750.6,1335.4 C752.6,1331 754.2,1324 753.4,1316.6 M736,1321.6 C739,1327 745,1331 750.6,1335.4 M733,1329.4 C738,1327 746,1322 752.6,1317.6 M741,1318.6 C741.6,1324 743,1330 745,1335.8 M746.6,1316 C747,1322 748.6,1330 750.6,1335.4 M734,1325 C740,1327 748,1327.6 753.6,1325.6 M738,1333 C742,1329 748,1323 753,1320.6 M732.6,1327.4 L741,1334.8"/></g><g stroke="#e3242b" stroke-width="0.95"><path d="M738.2,1300 C746,1302.6 758,1305 767.6,1310.6 C758,1311.4 744,1315.4 735.2,1322.4 C741,1314.6 743.4,1307 738.2,1300 Z"/><path d="M738.2,1300 L749.6,1309.2 L767.6,1310.6 M749.6,1309.2 L735.2,1322.4 M742.6,1301.6 L749.6,1309.2 L755.4,1304.6 M749.6,1309.2 L760.6,1307 M749.6,1309.2 L757,1312 M749.6,1309.2 L748,1314.4 M741.6,1305.6 L749.6,1309.2 L742.6,1312.6 M745,1303 L744.6,1311.6 L753,1306.6 L752.6,1312.8 M740.6,1315.6 L753,1306.6 M739,1318 L746,1315"/></g></g>
<g transform="translate(0,556)"><rect x="751" y="831.9" width="12.4" height="35.8" rx="1.6" fill="url(#pb1)"/><rect x="742.8" y="840.5" width="13.6" height="27.2" rx="1.6" fill="#b9781f" opacity=".45"/><rect x="743.4" y="840.9" width="12.8" height="26.8" rx="1.6" fill="url(#pb2)"/><rect x="736.2" y="850" width="12.9" height="17.7" rx="1.6" fill="url(#pb3)"/></g>
<g fill="none" stroke="#29b5e8" stroke-width="4.2" stroke-linecap="round" stroke-linejoin="round"><path d="M765.72,1500.20 L758.10,1495.80 L765.72,1491.40"/><path d="M761.67,1484.39 L754.05,1488.79 L754.05,1479.99"/><path d="M745.95,1479.99 L745.95,1488.79 L738.33,1484.39"/><path d="M734.28,1491.40 L741.90,1495.80 L734.28,1500.20"/><path d="M738.33,1507.21 L745.95,1502.81 L745.95,1511.61"/><path d="M754.05,1511.61 L754.05,1502.81 L761.67,1507.21"/></g><path d="M750,1491.3999999999999 L754.4,1495.8 L750,1500.2 L745.6,1495.8 Z" fill="#29b5e8" stroke="#29b5e8" stroke-width="0.8" stroke-linejoin="round"/><path d="M750,1494.1 L751.7,1495.8 L750,1497.5 L748.3,1495.8 Z" fill="#fff"/>
</svg>
<div class="t m" id="s_title" style="left:138.04px;top:59.00px;font-size:32.2px;letter-spacing:0.976px;-webkit-text-stroke-width:1.1px">Knowledge Catalog</div>
<div class="t m g" id="s_dc" style="left:138.31px;top:192.00px;font-size:26.8px;letter-spacing:0.446px">Data Catalog</div>
<div class="t " id="s_0" style="left:234.01px;top:284.00px;font-size:27.5px;letter-spacing:0.328px">Catalog Items</div>
<div class="t " id="s_1" style="left:265.26px;top:364.00px;font-size:27.5px;letter-spacing:0.337px">Reports</div>
<div class="t " id="s_2" style="left:266.67px;top:444.00px;font-size:27.5px;letter-spacing:-0.074px">Anomaly Overview</div>
<div class="t " id="s_3" style="left:265.53px;top:524.00px;font-size:27.5px;letter-spacing:0.191px">Data Export Projects</div>
<div class="t " id="s_4" style="left:265.53px;top:604.00px;font-size:27.5px;letter-spacing:0.215px">Master Data</div>
<div class="t " id="s_5" style="left:265.53px;top:684.00px;font-size:27.5px;letter-spacing:-0.229px">Reference Data</div>
<div class="t " id="s_6" style="left:265.53px;top:764.00px;font-size:27.5px;letter-spacing:0.646px">Not Monitored</div>
<div class="t " id="s_7" style="left:233.93px;top:844.00px;font-size:27.5px;letter-spacing:0.063px">Sources</div>
<div class="t " id="s_8" style="left:234.41px;top:924.00px;font-size:27.5px;letter-spacing:0.319px">Term Suggestions</div>
<div class="t " id="s_9" style="left:233.53px;top:1004.00px;font-size:27.5px;letter-spacing:0.320px">Lineage Assets</div>
<div class="t " id="s_10" style="left:233.93px;top:1084.00px;font-size:27.5px;letter-spacing:-0.051px">Scan Plans</div>
<div class="t m" id="s_11" style="left:234.04px;top:1164.00px;font-size:26.8px;letter-spacing:0.794px">Lineage Import</div>
<div class="t m" id="h_title" style="left:782.24px;top:59.00px;font-size:38.2px;letter-spacing:1.122px;-webkit-text-stroke-width:1.2px">Lineage Import</div>
<div class="t g" id="st_0" style="left:652.94px;top:208.00px;font-size:27.5px;letter-spacing:0.231px">1. Upload file</div>
<div class="t g" id="st_1" style="left:943.05px;top:208.00px;font-size:27.5px;letter-spacing:0.255px">2. File processing</div>
<div class="t g" id="st_2" style="left:1289.10px;top:208.00px;font-size:27.5px;letter-spacing:0.503px">3. Mapping</div>
<div class="t g" id="st_3" style="left:1557.00px;top:208.00px;font-size:27.5px;letter-spacing:0.045px">4. Creating lineage</div>
<div class="t m" id="st_4" style="left:1917.27px;top:208.00px;font-size:26.8px;letter-spacing:0.780px">5. Confirm import</div>
<div class="t g" id="tb_show" style="left:653.26px;top:312.00px;font-size:27.5px;letter-spacing:-0.145px">Show</div>
<div class="t m g" id="seg_0" style="left:813.59px;top:312.00px;font-size:26.8px;letter-spacing:1.131px">All</div>
<div class="t m" id="seg_1" style="left:958.58px;top:312.00px;font-size:26.8px;letter-spacing:0.473px">Expand</div>
<div class="t m g" id="seg_2" style="left:1121.59px;top:312.00px;font-size:26.8px;letter-spacing:0.662px">Overwrite</div>
<div class="t m g" id="seg_3" style="left:1325.87px;top:312.00px;font-size:26.8px;letter-spacing:0.199px">Keep</div>
<div class="t m" id="tb_sm" style="left:2606.28px;top:312.00px;font-size:26.8px;letter-spacing:0.776px">Show mapping</div>
<div class="t m" id="tb_cm" style="left:2903.88px;top:312.00px;font-size:26.8px;letter-spacing:0.628px">Change mapping</div>
<div class="t m" id="c_title" style="left:702.03px;top:462.50px;font-size:37.4px;letter-spacing:1.240px;-webkit-text-stroke-width:1.15px">Expand current with new</div>
<div class="t m" id="c_btnt" style="left:1205.74px;top:463.20px;font-size:26.8px;letter-spacing:0.459px">Expand</div>
<div class="t g" id="c_d1" style="left:701.28px;top:528.00px;font-size:27.5px;letter-spacing:0.225px">Keep the current lineage and add lineage information for new Catalog items.</div>
<div class="t g" id="c_d2" style="left:702.09px;top:568.00px;font-size:27.5px;letter-spacing:0.296px">Catalog items that exist in both versions of lineage will be left as is.</div>
<div class="t " id="c_h1" style="left:701.35px;top:665.30px;font-size:33.5px;letter-spacing:0.245px">Imported Catalog items matched in ONE Knowledge catalog</div>
<div class="t " id="c_h2" style="left:701.35px;top:1041.30px;font-size:33.5px;letter-spacing:0.279px">Imported Catalog items not matched in ONE Knowledge catalog</div>
<div class="t m" id="t1_h0" style="left:705.46px;top:740.00px;font-size:26.8px;letter-spacing:0.776px">Connection type</div>
<div class="t m" id="t1_h1" style="left:1125.53px;top:740.00px;font-size:26.8px;letter-spacing:0.552px">ONE connection</div>
<div class="t m" id="t1_h2" style="left:2125.89px;top:740.00px;font-size:26.8px;letter-spacing:0.433px">ONE Catalog items</div>
<div class="t " id="t1_a0" style="left:784.53px;top:830.00px;font-size:27.5px;letter-spacing:0.667px">Powerbi</div>
<div class="t " id="t1_b0" style="left:1124.01px;top:830.00px;font-size:27.5px;letter-spacing:0.388px">PowerBIJob1</div>
<div class="t " id="t1_c0" style="left:2126.18px;top:830.00px;font-size:27.5px">6</div>
<div class="t " id="t1_a1" style="left:785.10px;top:920.00px;font-size:27.5px;letter-spacing:0.457px">Snowflake</div>
<div class="t " id="t1_b1" style="left:1125.11px;top:920.00px;font-size:27.5px;letter-spacing:0.705px">dbt/ataccama-analytics</div>
<div class="t " id="t1_c1" style="left:2126.07px;top:920.00px;font-size:27.5px;letter-spacing:0.346px">10</div>
<div class="t grn" id="t1_e1" style="left:2163.97px;top:920.00px;font-size:23.5px;letter-spacing:0.256px">(+10)</div>
<div class="t m" id="t2_h0" style="left:705.46px;top:1116.00px;font-size:26.8px;letter-spacing:0.776px">Connection type</div>
<div class="t m" id="t2_h1" style="left:1125.57px;top:1116.00px;font-size:26.8px;letter-spacing:0.819px">Source connection</div>
<div class="t m" id="t2_h2" style="left:2126.17px;top:1116.00px;font-size:26.8px;letter-spacing:0.974px">Catalog items w/o match</div>
<div class="t " id="t2_a0" style="left:784.53px;top:1206.00px;font-size:27.5px;letter-spacing:0.597px">Filesystem</div>
<div class="t " id="t2_b0" style="left:1124.16px;top:1206.00px;font-size:26.5px;letter-spacing:-0.332px">FILESYSTEM/POWER BI INCLUDE FILES</div>
<div class="t " id="t2_c0" style="left:2126.42px;top:1206.00px;font-size:27.5px">2</div>
<div class="t " id="t2_a1" style="left:784.53px;top:1296.00px;font-size:27.5px;letter-spacing:1.727px">Mssql</div>
<div class="t " id="t2_b1" style="left:1124.01px;top:1296.00px;font-size:27.5px;letter-spacing:0.636px">MSSQL/./IP</div>
<div class="t " id="t2_c1" style="left:2126.25px;top:1296.00px;font-size:27.5px;letter-spacing:0.735px">17</div>
<div class="t " id="t2_a2" style="left:784.53px;top:1386.00px;font-size:27.5px;letter-spacing:0.667px">Powerbi</div>
<div class="t " id="t2_b2" style="left:1124.01px;top:1386.00px;font-size:27.5px;letter-spacing:0.388px">PowerBIJob1</div>
<div class="t " id="t2_c2" style="left:2126.48px;top:1386.00px;font-size:27.5px;letter-spacing:0.221px">56</div>
<div class="t " id="t2_a3" style="left:785.10px;top:1476.00px;font-size:27.5px;letter-spacing:0.457px">Snowflake</div>
<div class="t " id="t2_b3" style="left:1125.11px;top:1476.00px;font-size:27.5px;letter-spacing:0.705px">dbt/ataccama-analytics</div>
<div class="t " id="t2_c3" style="left:2126.01px;top:1476.00px;font-size:27.5px;letter-spacing:0.663px">497</div>
<div class="t grn" id="t2_e3" style="left:2179.09px;top:1476.00px;font-size:23.5px;letter-spacing:0.435px">(+497)</div>
<div class="t m" id="fb" style="left:33.55px;top:1838.00px;font-size:25.5px;letter-spacing:-0.388px;color:#fff">FB</div>
</div>
</body>
</html>
